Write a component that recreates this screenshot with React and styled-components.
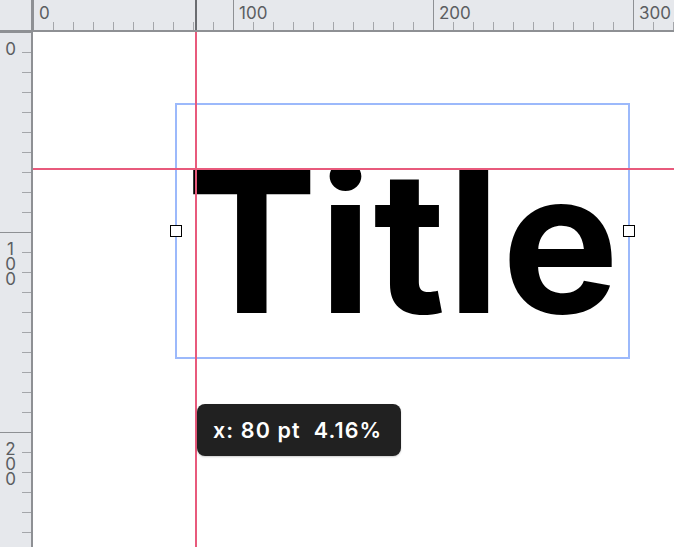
import React from 'react';
import styled, { createGlobalStyle } from 'styled-components';

const GlobalStyle = createGlobalStyle`
  html, body {
    margin: 0;
    padding: 0;
    background: #ffffff;
    overflow: hidden;
  }
  body {
    font-family: Inter, "Liberation Sans", sans-serif;
  }
`;

const RULER_BG = '#e6e8ec';
const RULER_EDGE = '#8e9094';
const TICK = '#a4a6aa';
const LABEL = '#5b5d61';
const GUIDE = '#e85a7c';
const SELECT = '#9cb9fb';

const Workspace = styled.div`
  display: grid;
  grid-template-columns: 33px 1fr;
  grid-template-rows: 32px 1fr;
  width: 674px;
  height: 547px;
  overflow: hidden;
`;

const Corner = styled.div`
  background: ${RULER_BG};
  border-right: 2px solid ${RULER_EDGE};
  border-bottom: 2px solid ${RULER_EDGE};
`;

const RulerStrip = styled.div`
  position: relative;
  background: ${RULER_BG};
  overflow: hidden;
  border-${p => (p.$vertical ? 'right' : 'bottom')}: 2px solid ${RULER_EDGE};

  svg {
    display: block;
  }
  text {
    font-family: Inter, "Liberation Sans", sans-serif;
    font-size: 17px;
    fill: ${LABEL};
  }
`;

// stacked digits down the side ruler, one per line
const SideLabel = styled.div`
  position: absolute;
  left: 5px;
  width: 11px;
  font-family: Inter, "Liberation Sans", sans-serif;
  font-size: 17px;
  line-height: 15px;
  color: ${LABEL};
  text-align: center;
  word-break: break-all;
`;

const Canvas = styled.div`
  position: relative;
  background: #ffffff;
  overflow: hidden;
`;

const Frame = styled.div`
  position: absolute;
  left: 142px;
  top: 71px;
  display: flex;
  flex-direction: column;
  width: 451px;
  height: 252px;
  border: 2px solid ${SELECT};
`;

// text area is cut at the top margin
const TextClip = styled.div`
  flex: 1;
  margin-top: 65px;
  overflow: hidden;
`;

const Title = styled.div`
  margin-top: -27px;
  padding-left: 9px;
  font-family: Inter, "Liberation Sans", sans-serif;
  font-weight: 700;
  font-size: 197px;
  line-height: 197px;
  letter-spacing: 1.2px;
  color: #000000;
  white-space: nowrap;
`;

const HandleRow = styled.div`
  position: absolute;
  inset: 0 -7px;
  display: flex;
  align-items: center;
  justify-content: space-between;
  pointer-events: none;
`;

const Handle = styled.div`
  width: 10px;
  height: 10px;
  margin-top: -1px;
  background: #ffffff;
  border: 1px solid #000000;
`;

const Guide = styled.div`
  position: absolute;
  background: ${GUIDE};
  ${p =>
    p.$axis === 'x'
      ? `left: ${p.$at}px; top: 0; bottom: 0; width: 2px;`
      : `top: ${p.$at}px; left: 0; right: 0; height: 2px;`}
`;

const Tooltip = styled.div`
  position: absolute;
  left: 164px;
  top: 372px;
  display: flex;
  align-items: center;
  box-sizing: border-box;
  width: 204px;
  height: 52px;
  padding: 0 16px;
  border-radius: 8px;
  background: #212121;
  color: #ffffff;
  font-family: Inter, "Liberation Sans", sans-serif;
  font-weight: 600;
  font-size: 21.5px;
  letter-spacing: 1.1px;
  white-space: pre;
  box-shadow: 0 1px 2px rgba(0, 0, 0, 0.2);
`;

// 2px per unit, minor tick every 10 units
const STEP = 20;

function HorizontalRuler({ length, marker }) {
  const ticks = [];
  for (let x = 0; x <= length; x += STEP) {
    const major = x % 200 === 0;
    ticks.push(
      <line
        key={x}
        x1={x + 0.5}
        x2={x + 0.5}
        y1={major ? 0 : 22}
        y2={30}
        stroke={major ? RULER_EDGE : TICK}
        strokeWidth="1"
      />
    );
    if (major) {
      ticks.push(
        <text key={'l' + x} x={x + 6} y={19}>
          {x / 2}
        </text>
      );
    }
  }
  return (
    <RulerStrip>
      <svg width={length} height={30}>
        {ticks}
        <rect x={marker} y={0} width={2} height={30} fill="#6a6c70" />
      </svg>
    </RulerStrip>
  );
}

function VerticalRuler({ length }) {
  const ticks = [];
  const labels = [];
  for (let y = 0; y <= length; y += STEP) {
    const major = y % 200 === 0;
    ticks.push(
      <line
        key={y}
        x1={major ? 0 : 22}
        x2={31}
        y1={y + 0.5}
        y2={y + 0.5}
        stroke={major ? RULER_EDGE : TICK}
        strokeWidth="1"
      />
    );
    if (major) {
      labels.push(
        <SideLabel key={y} style={{ top: y + 10 }}>
          {y / 2}
        </SideLabel>
      );
    }
  }
  return (
    <RulerStrip $vertical>
      <svg width={31} height={length}>
        {ticks}
      </svg>
      {labels}
    </RulerStrip>
  );
}

export default function App() {
  return (
    <>
      <GlobalStyle />
      <Workspace>
        <Corner />
        <HorizontalRuler length={641} marker={162} />
        <VerticalRuler length={515} />
        <Canvas>
          <Frame>
            <TextClip>
              <Title>Title</Title>
            </TextClip>
            <HandleRow>
              <Handle />
              <Handle />
            </HandleRow>
          </Frame>
          <Guide $axis="x" $at={162} />
          <Guide $axis="y" $at={136} />
          <Tooltip>x: 80 pt  4.16%</Tooltip>
        </Canvas>
      </Workspace>
    </>
  );
}
